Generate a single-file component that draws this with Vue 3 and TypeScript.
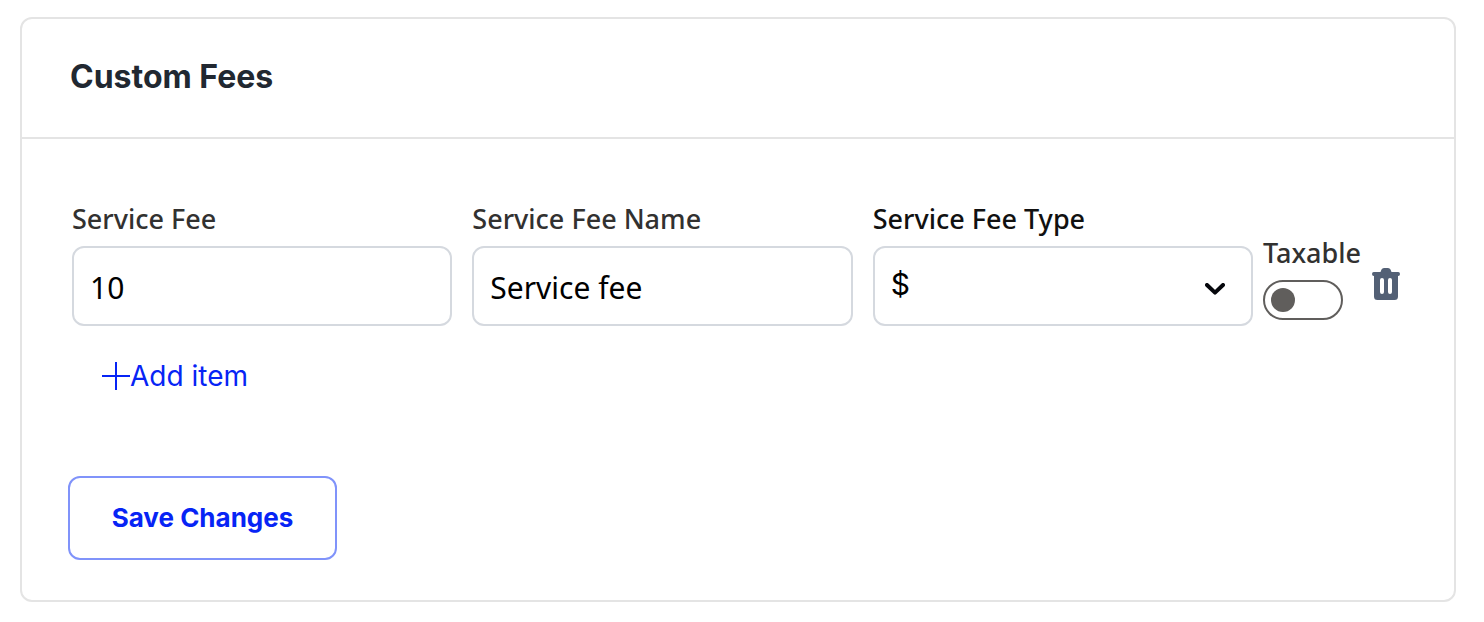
<script setup lang="ts">
import { ref } from 'vue'

interface Fee {
  id: number
  amount: string
  name: string
  type: string
  taxable: boolean
}

const fees = ref<Fee[]>([
  { id: 1, amount: '10', name: 'Service fee', type: '$', taxable: false },
])
let nextId = 2

function addFee(): void {
  fees.value.push({ id: nextId++, amount: '', name: '', type: '$', taxable: false })
}

function removeFee(id: number): void {
  fees.value = fees.value.filter((fee) => fee.id !== id)
}
</script>

<template>
  <main class="page">
    <form class="card" @submit.prevent>
      <header class="card-head">
        <h2 class="title">Custom Fees</h2>
      </header>
      <div class="card-body">
        <div v-for="fee in fees" :key="fee.id" class="fee-row">
          <div class="field">
            <label class="label" :for="`amount-${fee.id}`">Service Fee</label>
            <input :id="`amount-${fee.id}`" v-model="fee.amount" class="control" type="text" inputmode="decimal" />
          </div>
          <div class="field">
            <label class="label" :for="`name-${fee.id}`">Service Fee Name</label>
            <input :id="`name-${fee.id}`" v-model="fee.name" class="control" type="text" />
          </div>
          <div class="field">
            <label class="label label-dark" :for="`type-${fee.id}`">Service Fee Type</label>
            <div class="select-wrap">
              <select :id="`type-${fee.id}`" v-model="fee.type" class="control select">
                <option value="$">$</option>
                <option value="%">%</option>
              </select>
              <svg class="chevron" viewBox="0 0 20 12" aria-hidden="true">
                <path d="M2 2 L10 9.6 L18 2" />
              </svg>
            </div>
          </div>
          <div class="taxable">
            <label class="label" :for="`taxable-${fee.id}`">Taxable</label>
            <input :id="`taxable-${fee.id}`" v-model="fee.taxable" class="switch" type="checkbox" role="switch" />
          </div>
          <button class="delete" type="button" aria-label="Delete fee" @click="removeFee(fee.id)">
            <svg class="trash" viewBox="0 0 28 32" aria-hidden="true">
              <path
                fill-rule="evenodd"
                d="M8.500 4L9.500 1.500Q10.200 0 12 0H16Q17.800 0 18.500 1.500L19.500 4H26.200Q28 4 28 6Q28 8 26.200 8H26V28.500Q26 32 22.500 32H5.500Q2 32 2 28.500V8H1.800Q0 8 0 6Q0 4 1.800 4ZM8 12V24Q8 26 10 26Q12 26 12 24V12Q12 10 10 10Q8 10 8 12ZM16 12V24Q16 26 18 26Q20 26 20 24V12Q20 10 18 10Q16 10 16 12Z"
              />
            </svg>
          </button>
        </div>
        <button class="add" type="button" @click="addFee">
          <svg class="plus" viewBox="0 0 28 28" aria-hidden="true">
            <path d="M14 0V28M0 14H28" />
          </svg>
          <span>Add item</span>
        </button>
        <button class="save" type="submit">Save Changes</button>
      </div>
    </form>
  </main>
</template>

<style>
body {
  margin: 0;
  background: #fff;
}
</style>

<style scoped>
.page {
  padding: 17px 28px 20px 20px;
  font-family: 'Noto Sans', 'Open Sans', sans-serif;
}

.card {
  border: 2px solid #e4e4e4;
  border-radius: 12px;
}

.card-head {
  padding: 38px 48px 40px;
  border-bottom: 2px solid #e4e4e4;
}

.title {
  margin: 0;
  color: #212831;
  font: 700 32px/40px Inter, sans-serif;
}

.card-body {
  display: flex;
  flex-direction: column;
  align-items: flex-start;
  padding: 63px 46px 40px;
}

.fee-row {
  display: flex;
  box-sizing: border-box;
  width: 100%;
  padding: 0 8px 0 4px;
}

.field {
  flex: 1;
  min-width: 0;
  margin-right: 20px;
}

.field:nth-child(3) {
  margin-right: 10px;
}

.label {
  display: block;
  color: #323130;
  font-size: 27px;
  font-weight: 500;
  line-height: 34px;
  white-space: nowrap;
}

.label-dark {
  color: #111;
}

.field .label {
  margin-bottom: 10px;
}

.control {
  display: block;
  box-sizing: border-box;
  width: 100%;
  height: 80px;
  padding: 2px 16px 0;
  border: 2px solid #d5d9df;
  border-radius: 12px;
  background: #fff;
  color: #000;
  font-family: inherit;
  font-size: 30px;
}

.select-wrap {
  position: relative;
}

.select {
  appearance: none;
  padding: 0 48px 4px 16px;
  font-family: Inter, sans-serif;
}

.chevron {
  position: absolute;
  top: 37px;
  right: 28px;
  width: 20px;
  height: 12px;
  fill: none;
  stroke: #05070c;
  stroke-width: 4;
  stroke-linecap: round;
  stroke-linejoin: round;
  pointer-events: none;
}

.taxable {
  width: 96px;
  padding-top: 34px;
}

.switch {
  display: flex;
  align-items: center;
  appearance: none;
  box-sizing: border-box;
  width: 80px;
  height: 40px;
  margin: 10px 0 0;
  padding: 0 6px;
  border: 2px solid #605e5c;
  border-radius: 20px;
  background: #fff;
}

.switch::before {
  width: 24px;
  height: 24px;
  border-radius: 50%;
  background: #605e5c;
  content: '';
}

.switch:checked {
  justify-content: flex-end;
}

.delete {
  align-self: flex-start;
  margin: 66px 0 0 13px;
  padding: 0;
  border: 0;
  background: none;
}

.trash {
  display: block;
  width: 28px;
  height: 32px;
  fill: #536075;
}

.add {
  display: flex;
  align-items: center;
  margin: 32px 0 0 34px;
  padding: 0;
  border: 0;
  background: none;
  color: #0724f5;
  font: 400 28px/36px Inter, sans-serif;
}

.plus {
  width: 28px;
  height: 28px;
  fill: none;
  stroke: #0724f5;
  stroke-width: 2;
}

.save {
  min-width: 269px;
  margin-top: 82px;
  padding: 22px 40px;
  border: 2px solid #8093fa;
  border-radius: 12px;
  background: #fff;
  color: #0724f5;
  font: 700 26px/36px Inter, sans-serif;
}
</style>
